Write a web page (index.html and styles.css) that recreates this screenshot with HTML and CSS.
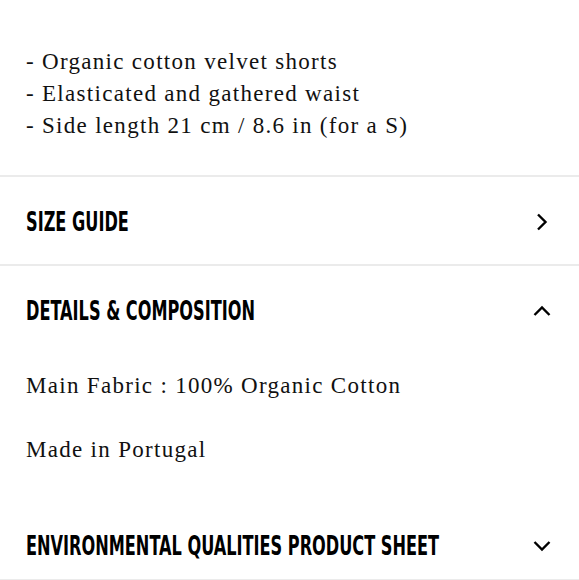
FILE: index.html
```html
<!DOCTYPE html>
<html lang="en">
<head>
  <meta charset="UTF-8">
  <meta name="viewport" content="width=device-width, initial-scale=1">
  <title>Product details</title>
  <link rel="stylesheet" href="styles.css">
</head>
<body>

  <div class="description">
    <p>- Organic cotton velvet shorts</p>
    <p>- Elasticated and gathered waist</p>
    <p>- Side length 21 cm / 8.6 in (for a S)</p>
  </div>

  <div class="accordion-item size-guide">
    <div class="accordion-header">
      <span class="accordion-title">Size guide</span>
      <svg class="chevron" width="18" height="18" viewBox="0 0 18 18"><path d="M5 1.5 L12.5 9 L5 16.5" /></svg>
    </div>
  </div>

  <div class="accordion-item open">
    <div class="accordion-header">
      <span class="accordion-title">Details &amp; Composition</span>
      <svg class="chevron" width="18" height="18" viewBox="0 0 18 18"><path d="M1.5 13 L9 5.5 L16.5 13" /></svg>
    </div>
    <div class="accordion-content">
      <p>Main Fabric : 100% Organic Cotton</p>
      <p>Made in Portugal</p>
    </div>
  </div>

  <div class="accordion-item environment">
    <div class="accordion-header">
      <span class="accordion-title">Environmental qualities product sheet</span>
      <svg class="chevron" width="18" height="18" viewBox="0 0 18 18"><path d="M1.5 5 L9 12.5 L16.5 5" /></svg>
    </div>
  </div>

</body>
</html>
```

FILE: styles.css
```css
* {
  box-sizing: border-box;
}

body {
  font-family: "Liberation Serif", serif;
  color: #111;
  margin: 0;
  padding: 46px 0 0;
  overflow: hidden;
}

p {
  margin: 0;
}

.description {
  padding: 0 26px 33px;
  font-size: 23px;
  line-height: 32px;
  letter-spacing: 1.3px;
}

.accordion-item {
  border-top: 2px solid #ebebeb;
}

.accordion-item.environment {
  border-top: none;
  border-bottom: 2px solid #ebebeb;
}

.accordion-header {
  display: flex;
  align-items: center;
  padding: 31px 28px 28px 26px;
}

.environment .accordion-header {
  padding-bottom: 19px;
}

.accordion-title {
  flex: 1;
  min-width: 0;
  white-space: nowrap;
  font-family: "DejaVu Sans", sans-serif;
  font-stretch: condensed;
  font-weight: bold;
  font-size: 27px;
  line-height: 28px;
  text-transform: uppercase;
  color: #000;
  transform: scaleX(0.665);
  transform-origin: left center;
}

.chevron {
  flex-shrink: 0;
  fill: none;
  stroke: #000;
  stroke-width: 2.4;
}

.accordion-content {
  padding: 17px 26px 35px;
  font-size: 23px;
  line-height: 32px;
  letter-spacing: 1.3px;
}

.accordion-content p {
  margin-bottom: 32px;
}

.accordion-content p:last-child {
  margin-bottom: 0;
}
```
